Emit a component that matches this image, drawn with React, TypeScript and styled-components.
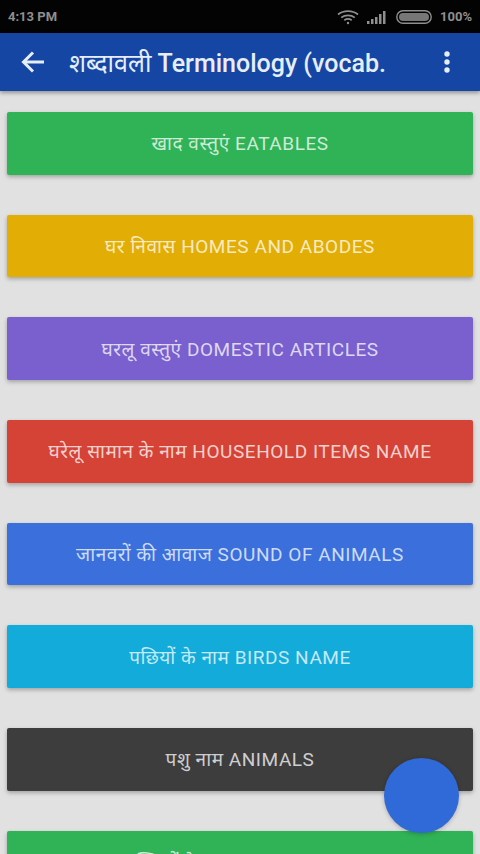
import React from 'react'
import styled, { createGlobalStyle } from 'styled-components';

const GlobalStyle = createGlobalStyle`
  html, body {
    margin: 0;
    padding: 0;
    height: 854px;
    overflow: hidden;
    background: #e1e1e1;
    font-family: Roboto, "Noto Sans", sans-serif;
  }
`;

const Screen = styled.div`
  position: relative;
  width: 480px;
  height: 854px;
  overflow: hidden;
  background: #e1e1e1;
`;

const StatusBar = styled.div`
  height: 33px;
  box-sizing: border-box;
  padding: 0 8px 0 8px;
  display: flex;
  align-items: center;
  background: #030303;
  color: #8f8f8f;
  font-size: 13px;
  font-weight: 700;
`;

const StatusTime = styled.span`
  flex: 1;
`;

const StatusIcons = styled.div`
  display: flex;
  align-items: center;
  gap: 8px;
`;

const AppBar = styled.header`
  position: relative;
  height: 58px;
  display: flex;
  align-items: center;
  box-sizing: border-box;
  padding: 0 29px 0 21px;
  background: #1546a3;
  box-shadow: 0 2px 4px rgba(0, 0, 0, 0.35);
  color: #e6eefb;
`;

const Title = styled.h1`
  flex: 1;
  margin: 0 0 0 25px;
  font-size: 25px;
  font-weight: 500;
  white-space: nowrap;
`;

const TitleHindi = styled.span`
  font-weight: 400;
`;

const List = styled.main`
  display: flex;
  flex-direction: column;
  gap: 40px;
  padding: 21px 7px 0;
`;

const Card = styled.button<{ $color: string }>`
  flex: none;
  height: 62.7px;
  border: 0;
  border-radius: 2px;
  padding: 0;
  background: ${(p) => p.$color};
  color: rgba(255, 255, 255, 0.76);
  font-family: inherit;
  font-size: 19px;
  letter-spacing: 0.55px;
  box-shadow: 0 2px 4px rgba(0, 0, 0, 0.28);
`;

const Fab = styled.button`
  position: absolute;
  left: 384px;
  top: 758px;
  width: 75px;
  height: 75px;
  border: 0;
  border-radius: 50%;
  background: #3069d8;
  box-shadow: 0 1px 4px rgba(0, 0, 0, 0.25);
`;

const items = [
    { name: "खाद वस्तुएं EATABLES", color: "#30b257" },
    { name: "घर निवास HOMES AND ABODES", color: "#e2ae06" },
    { name: "घरलू वस्तुएं DOMESTIC ARTICLES", color: "#7a5fce" },
    { name: "घरेलू सामान के नाम HOUSEHOLD ITEMS NAME", color: "#d54337" },
    { name: "जानवरों की आवाज SOUND OF ANIMALS", color: "#3a6fdc" },
    { name: "पछियों के नाम BIRDS NAME", color: "#13abda" },
    { name: "पशु नाम ANIMALS", color: "#3d3d3d" },
    { name: "सब्जियों के नाम VEGETABLES", color: "#30b257" },
];

function App() {
    return (
        <Screen>
            <GlobalStyle />
            <StatusBar>
                <StatusTime>4:13 PM</StatusTime>
                <StatusIcons>
                    <svg width="22" height="16" viewBox="0 0 22 16" fill="none" stroke="#8f8f8f" strokeWidth="1.7">
                        <path d="M1 5.500c5.500-4.600 14.500-4.600 20 0" />
                        <path d="M4.200 8.600c3.700-3 9.900-3 13.600 0" />
                        <path d="M7.300 11.300c2.100-1.500 5.300-1.500 7.400 0" />
                        <circle cx="11" cy="14" r="1.200" fill="#8f8f8f" stroke="none" />
                    </svg>
                    <svg width="21" height="14" viewBox="0 0 21 14" fill="#8f8f8f">
                        <rect x="0" y="11" width="2.500" height="3" />
                        <rect x="4" y="9" width="2.500" height="5" />
                        <rect x="8" y="7" width="2.500" height="7" />
                        <rect x="12" y="4" width="2.500" height="10" />
                        <rect x="16" y="1" width="2.500" height="13" />
                    </svg>
                    <svg width="36" height="14" viewBox="0 0 36 14">
                        <rect x="0.800" y="0.800" width="34.400" height="12.400" rx="6.200" fill="none" stroke="#8f8f8f" strokeWidth="1.400" />
                        <rect x="3" y="3" width="30" height="8" rx="4" fill="#777" />
                    </svg>
                    <span>100%</span>
                </StatusIcons>
            </StatusBar>
            <AppBar>
                <svg width="23" height="22" viewBox="0 0 23 22" fill="none" stroke="#e6eefb" strokeWidth="3">
                    <path d="M23 11H3" />
                    <path d="M12 1.500 2.500 11l9.500 9.500" />
                </svg>
                <Title><TitleHindi>शब्दावली</TitleHindi> Terminology (vocab.</Title>
                <svg width="8" height="24" viewBox="0 0 8 24" fill="#e6eefb">
                    <circle cx="4" cy="4" r="2.700" />
                    <circle cx="4" cy="12" r="2.700" />
                    <circle cx="4" cy="20" r="2.700" />
                </svg>
            </AppBar>
            <List>
                {items.map((item, index) => (
                    <Card key={index} $color={item.color}>
                        {item.name}
                    </Card>
                ))}
            </List>
            <Fab />
        </Screen>
    )
}

export default App
